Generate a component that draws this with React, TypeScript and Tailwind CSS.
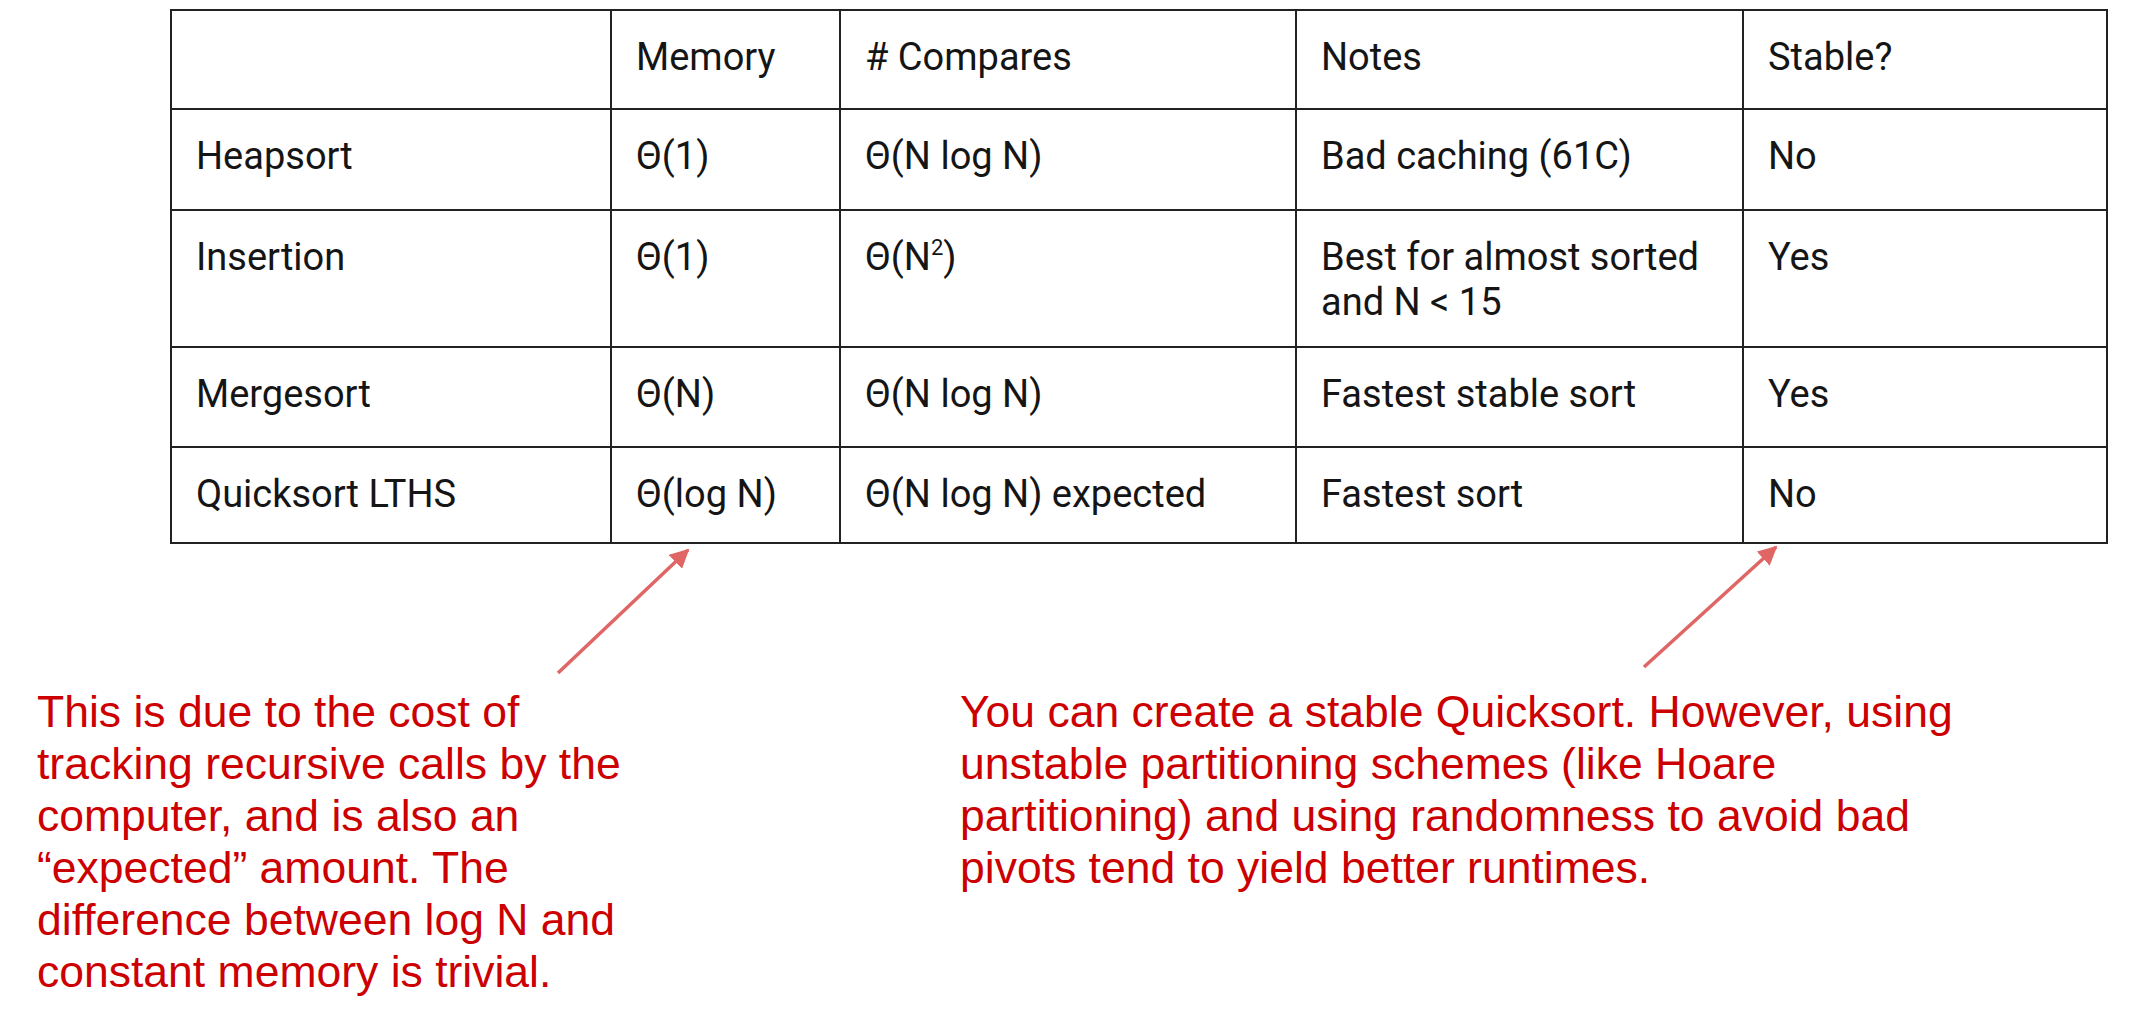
import React from "react";

const rows: React.ReactNode[][] = [
  ["", "Memory", "# Compares", "Notes", "Stable?"],
  ["Heapsort", "Θ(1)", "Θ(N log N)", "Bad caching (61C)", "No"],
  [
    "Insertion",
    "Θ(1)",
    <span key="n2">
      Θ(N<span className="inline-block align-top text-[22px] leading-[22px] mt-[2px]">2</span>)
    </span>,
    <span key="b">
      Best for almost sorted
      <br />
      and N &lt; 15
    </span>,
    "Yes",
  ],
  ["Mergesort", "Θ(N)", "Θ(N log N)", "Fastest stable sort", "Yes"],
  ["Quicksort LTHS", "Θ(log N)", "Θ(N log N) expected", "Fastest sort", "No"],
];

export default function App() {
  return (
    <div
      className="relative w-[2132px] h-[1023px] overflow-hidden bg-white"
      style={{ fontFamily: "Roboto, 'Liberation Sans', sans-serif" }}
    >
      <div className="pl-[170px] pt-[9px]">
        <div className="grid grid-cols-[440px_229px_456px_447px_364px] grid-rows-[99px_101px_137px_100px_96px] border-l-[2px] border-t-[2px] border-[#222222] w-fit">
          {rows.map((r, ri) =>
            r.map((c, ci) => (
              <div
                key={`${ri}-${ci}`}
                className="border-r-[2px] border-b-[2px] border-[#222222] pl-[24px] pt-[24px] text-[38px] leading-[45px] text-[#151515] whitespace-nowrap"
              >
                {c}
              </div>
            ))
          )}
        </div>
      </div>

      <div
        className="flex pt-[142px] text-[#cc0000] text-[44.5px] leading-[52px]"
        style={{ fontFamily: "'Liberation Sans', Arial, sans-serif" }}
      >
        <div className="pl-[37px] w-[960px] shrink-0 whitespace-nowrap">
          This is due to the cost of
          <br />
          tracking recursive calls by the
          <br />
          computer, and is also an
          <br />
          “expected” amount. The
          <br />
          difference between log N and
          <br />
          constant memory is trivial.
        </div>
        <div className="whitespace-nowrap">
          You can create a stable Quicksort. However, using
          <br />
          unstable partitioning schemes (like Hoare
          <br />
          partitioning) and using randomness to avoid bad
          <br />
          pivots tend to yield better runtimes.
        </div>
      </div>

      <svg
        className="absolute inset-0 pointer-events-none"
        width="2132"
        height="1023"
        viewBox="0 0 2132 1023"
      >
        <defs>
          <marker
            id="ah"
            viewBox="0 0 10 10"
            refX="9"
            refY="5"
            markerWidth="5.5"
            markerHeight="5.5"
            orient="auto-start-reverse"
          >
            <path d="M0,0 L10,5 L0,10 z" fill="#e06666" />
          </marker>
        </defs>
        <line x1="558" y1="673" x2="688" y2="550" stroke="#e06666" strokeWidth="3.5" markerEnd="url(#ah)" />
        <line x1="1644" y1="667" x2="1776" y2="547" stroke="#e06666" strokeWidth="3.5" markerEnd="url(#ah)" />
      </svg>
    </div>
  );
}
